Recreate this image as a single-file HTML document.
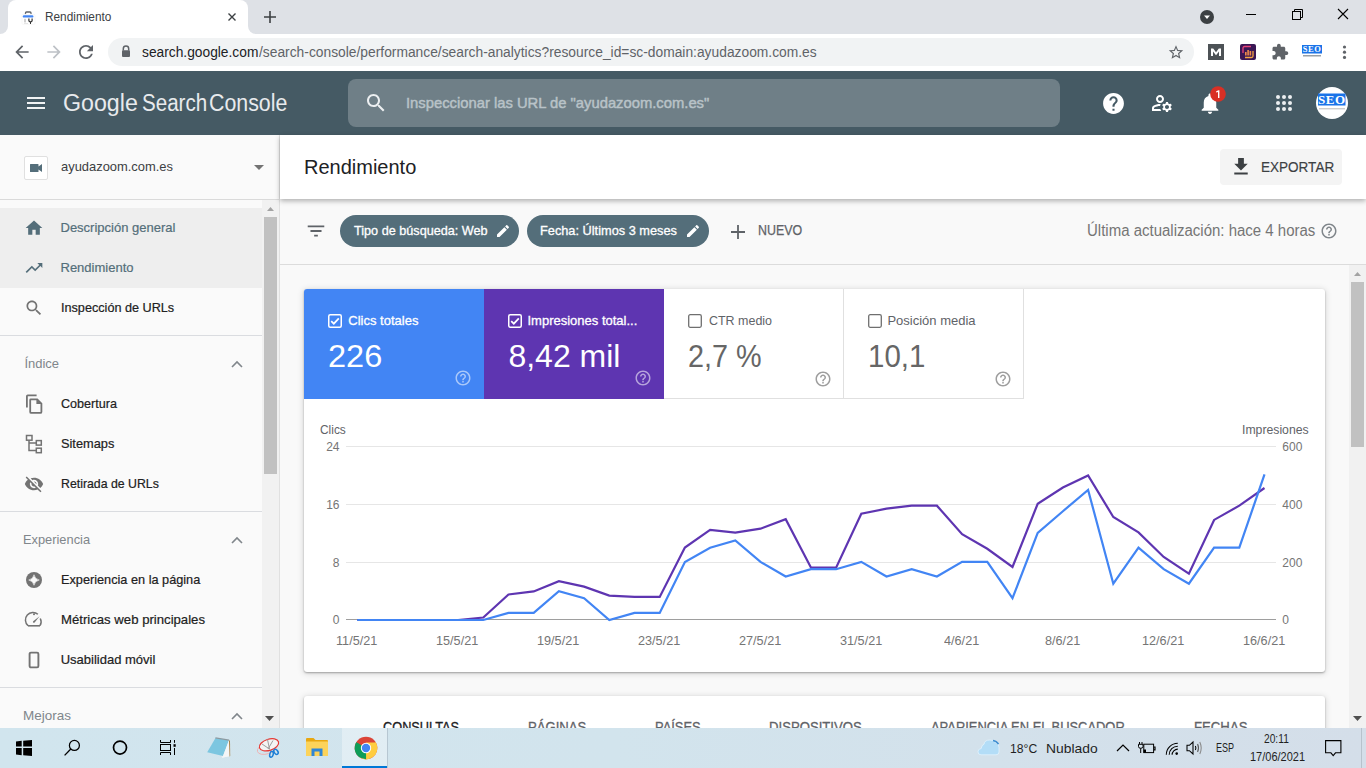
<!DOCTYPE html>
<html><head><meta charset="utf-8"><style>
*{box-sizing:border-box;margin:0;padding:0}
html,body{width:1366px;height:768px;overflow:hidden;background:#f8f9fa;font-family:"Liberation Sans",sans-serif;position:relative}
.a{position:absolute}
.t{position:absolute;line-height:0;white-space:pre;transform-origin:0 0;font-family:"Liberation Sans",sans-serif}
svg{position:absolute;overflow:visible}
</style></head><body>
<!-- ===== Chrome tab strip ===== -->
<div class="a" style="left:0;top:0;width:1366px;height:34px;background:#dee1e6"></div>
<div class="a" style="left:8px;top:0;width:240px;height:34px;background:#fff;border-radius:8px 8px 0 0"></div>
<!-- tab flare corners -->
<div class="a" style="left:0;top:26px;width:8px;height:8px;background:#fff"></div>
<div class="a" style="left:0;top:18px;width:8px;height:16px;background:#dee1e6;border-bottom-right-radius:8px"></div>
<div class="a" style="left:248px;top:26px;width:8px;height:8px;background:#fff"></div>
<div class="a" style="left:248px;top:18px;width:8px;height:16px;background:#dee1e6;border-bottom-left-radius:8px"></div>
<!-- toolbar -->
<div class="a" style="left:0;top:34px;width:1366px;height:37px;background:#fff"></div>
<div class="a" style="left:108px;top:38px;width:1086px;height:28px;background:#f1f3f4;border-radius:14px"></div>

<!-- ===== GSC header ===== -->
<div class="a" style="left:0;top:71px;width:1366px;height:64px;background:#455a64"></div>
<div class="a" style="left:348px;top:79px;width:712px;height:48px;background:#6f7f87;border-radius:8px"></div>

<!-- ===== Sidebar ===== -->
<div class="a" style="left:0;top:135px;width:279px;height:593px;background:#fafafa"></div>
<div class="a" style="left:279px;top:135px;width:1px;height:593px;background:#e0e0e0"></div>
<div class="a" style="left:0;top:199px;width:279px;height:1px;background:#dadada"></div>
<div class="a" style="left:24px;top:156px;width:24px;height:24px;background:#fff;border:1px solid #e0e0e0;border-radius:2px"></div>
<div class="a" style="left:0;top:208px;width:262px;height:80px;background:#eeeeee"></div>
<div class="a" style="left:0;top:335px;width:262px;height:1px;background:#dadce0"></div>
<div class="a" style="left:0;top:511px;width:262px;height:1px;background:#dadce0"></div>
<div class="a" style="left:0;top:687px;width:262px;height:1px;background:#dadce0"></div>
<!-- sidebar scrollbar -->
<div class="a" style="left:262px;top:200px;width:17px;height:528px;background:#f1f1f1"></div>
<div class="a" style="left:264px;top:217px;width:13px;height:257px;background:#c1c1c1"></div>

<!-- ===== Main ===== -->
<div class="a" style="left:280px;top:135px;width:1086px;height:593px;background:#f9f9f9"></div>
<div class="a" style="left:280px;top:264px;width:1086px;height:1px;background:#dcdcdc"></div>
<div class="a" style="left:280px;top:135px;width:1086px;height:64px;background:#fff;box-shadow:0 2px 5px rgba(0,0,0,.3)"></div>
<div class="a" style="left:1220px;top:149px;width:122px;height:36px;background:#f4f4f4;border-radius:4px"></div>
<!-- chips -->
<div class="a" style="left:340px;top:215px;width:179px;height:32px;background:#546e7a;border-radius:16px"></div>
<div class="a" style="left:527px;top:215px;width:182px;height:32px;background:#546e7a;border-radius:16px"></div>
<!-- main scrollbar -->
<div class="a" style="left:1349px;top:265px;width:17px;height:463px;background:#f1f1f1"></div>
<div class="a" style="left:1351px;top:282px;width:13px;height:165px;background:#c1c1c1"></div>

<!-- card 1 -->
<div class="a" style="left:304px;top:289px;width:1021px;height:383px;background:#fff;border-radius:3px;box-shadow:0 1px 2px rgba(0,0,0,.3),0 1px 6px 1px rgba(0,0,0,.12)"></div>
<div class="a" style="left:304px;top:289px;width:180px;height:110px;background:#4285f4;border-top-left-radius:3px"></div>
<div class="a" style="left:484px;top:289px;width:180px;height:110px;background:#5e35b1"></div>
<div class="a" style="left:664px;top:289px;width:360px;height:110px;border-right:1px solid #e0e0e0;border-bottom:1px solid #e0e0e0"></div>
<div class="a" style="left:843px;top:289px;width:1px;height:110px;background:#e0e0e0"></div>

<!-- card 2 -->
<div class="a" style="left:304px;top:696px;width:1021px;height:60px;background:#fff;border-radius:3px;box-shadow:0 1px 2px rgba(0,0,0,.3),0 1px 6px 1px rgba(0,0,0,.12)"></div>

<!-- ===== Taskbar ===== -->
<div class="a" style="left:0;top:728px;width:1366px;height:40px;background:linear-gradient(90deg,#d1e5ee 0%,#d2e4ed 45%,#d4dee9 100%);z-index:10"></div>
<div class="a" style="left:342px;top:728px;width:45px;height:40px;background:rgba(255,255,255,.35);z-index:10"></div>
<div class="a" style="left:342px;top:766px;width:45px;height:2px;background:#0078d7;z-index:10"></div>
<svg width="1366" height="768" style="left:0;top:0" viewBox="0 0 1366 768">
<g stroke="#e6e6e6" stroke-width="1"><line x1="346" y1="446.5" x2="1276" y2="446.5"/><line x1="346" y1="504.5" x2="1276" y2="504.5"/><line x1="346" y1="562.5" x2="1276" y2="562.5"/></g>
<line x1="346" y1="619.5" x2="1276" y2="619.5" stroke="#9e9e9e" stroke-width="1"/>
<polyline fill="none" stroke="#5e35b1" stroke-width="2.2" stroke-linejoin="miter" stroke-miterlimit="10" points="357.3,620.00 382.5,620.00 407.7,620.00 432.9,620.00 458.1,620.00 483.3,617.48 508.5,594.45 533.7,591.42 558.9,581.22 584.1,586.67 609.3,595.66 634.5,596.97 659.7,596.97 684.9,547.48 710.1,529.91 735.3,532.63 760.5,528.70 785.7,519.20 810.9,567.48 836.1,567.68 861.3,513.75 886.5,508.70 911.7,505.67 936.9,505.67 962.1,534.25 987.3,548.79 1012.5,566.98 1037.7,503.75 1062.9,487.49 1088.1,475.47 1113.3,516.98 1138.5,532.43 1163.7,556.98 1188.9,573.74 1214.1,519.91 1239.3,505.67 1264.5,487.99"/>
<polyline fill="none" stroke="#4285f4" stroke-width="2.2" stroke-linejoin="miter" stroke-miterlimit="10" points="357.3,620.00 382.5,620.00 407.7,620.00 432.9,620.00 458.1,620.00 483.3,620.00 508.5,612.93 533.7,612.93 558.9,591.22 584.1,598.18 609.3,620.00 634.5,612.93 659.7,612.93 684.9,561.92 710.1,547.68 735.3,540.41 760.5,561.92 785.7,576.47 810.9,569.20 836.1,569.20 861.3,561.92 886.5,576.47 911.7,569.20 936.9,576.47 962.1,561.92 987.3,561.92 1012.5,598.18 1037.7,532.94 1062.9,511.22 1088.1,489.91 1113.3,583.74 1138.5,547.68 1163.7,569.20 1188.9,583.74 1214.1,547.68 1239.3,547.68 1264.5,474.46"/>
</svg>
<!-- ===== Chrome icons ===== -->
<!-- favicon -->
<svg style="left:21px;top:10px" width="15" height="15" viewBox="0 0 15 15">
 <path d="M4.5 4.2V3Q4.5 2 5.5 2H9Q10 2 10 3V4.2" fill="none" stroke="#5f6368" stroke-width="1.3"/>
 <rect x="1" y="4.3" width="13" height="10" rx="1" fill="#fff" stroke="#eee" stroke-width=".5"/>
 <rect x="1.8" y="5.2" width="10.6" height="2.4" rx="1.2" fill="#4285f4"/>
 <rect x="3" y="8.8" width="2" height="3.6" fill="#d0d0d0"/><rect x="3" y="13" width="4" height=".8" fill="#e0e0e0"/>
 <path d="M7.3 8.6V10.8Q7.3 12.2 9 12.4V14H10V12.4Q11.7 12.2 11.7 10.8V8.6H10.5V10.5Q10.5 11.3 9.5 11.3Q8.5 11.3 8.5 10.5V8.6Z" fill="#333"/>
</svg>
<!-- tab close -->
<svg style="left:228px;top:13px" width="8" height="8" viewBox="0 0 8 8"><path d="M0.5 0.5L7.5 7.5M7.5 0.5L0.5 7.5" stroke="#3c4043" stroke-width="1.4"/></svg>
<!-- new tab plus -->
<svg style="left:264px;top:11px" width="12" height="12" viewBox="0 0 12 12"><path d="M6 0V12M0 6H12" stroke="#3c4043" stroke-width="1.6"/></svg>
<!-- title bar dropdown -->
<svg style="left:1200px;top:10px" width="14" height="14" viewBox="0 0 14 14"><circle cx="7" cy="7" r="7" fill="#3c4043"/><path d="M4 5.5H10L7 9Z" fill="#fff"/></svg>
<!-- minimize -->
<div class="a" style="left:1246px;top:14px;width:10px;height:1px;background:#000"></div>
<!-- restore -->
<svg style="left:1291px;top:9px" width="12" height="11" viewBox="0 0 12 11"><rect x="1.5" y="2.5" width="8" height="8" fill="none" stroke="#000" stroke-width="1"/><path d="M3.5 2.5V0.5H11.5V8.5H9.5" fill="none" stroke="#000" stroke-width="1"/></svg>
<!-- close -->
<svg style="left:1338px;top:9px" width="10" height="10" viewBox="0 0 10 10"><path d="M0 0L10 10M10 0L0 10" stroke="#000" stroke-width="1.1"/></svg>
<!-- back -->
<svg style="left:10px;top:40px" width="24" height="24" viewBox="0 0 24 24"><path d="M20 11H7.83l5.59-5.59L12 4l-8 8 8 8 1.41-1.41L7.83 13H20v-2z" fill="#5f6368" transform="translate(12 12) scale(0.83) translate(-12 -12)"/></svg>
<!-- forward -->
<svg style="left:42px;top:40px" width="24" height="24" viewBox="0 0 24 24"><path d="M12 4l-1.41 1.41L16.17 11H4v2h12.17l-5.58 5.59L12 20l8-8z" fill="#bdc1c6" transform="translate(12 12) scale(0.83) translate(-12 -12)"/></svg>
<!-- reload -->
<svg style="left:74px;top:40px" width="24" height="24" viewBox="0 0 24 24"><path d="M17.65 6.35C16.2 4.9 14.21 4 12 4c-4.42 0-7.99 3.58-7.99 8s3.57 8 7.99 8c3.73 0 6.84-2.55 7.73-6h-2.08c-.82 2.33-3.04 4-5.65 4-3.31 0-6-2.69-6-6s2.69-6 6-6c1.66 0 3.14.69 4.22 1.78L13 11h7V4l-2.35 2.35z" fill="#5f6368" transform="translate(12 12) scale(0.875) translate(-12 -12)"/></svg>
<!-- lock -->
<svg style="left:121px;top:45px" width="10" height="13" viewBox="0 0 10 13"><path d="M2.3 5.5V3.8A2.7 2.7 0 0 1 7.7 3.8V5.5" fill="none" stroke="#5f6368" stroke-width="1.5"/><rect x="1" y="5.2" width="8" height="6.8" rx="1" fill="#5f6368"/></svg>
<!-- star -->
<svg style="left:1164px;top:40px" width="24" height="24" viewBox="0 0 24 24"><path d="M22 9.24l-7.19-.62L12 2 9.19 8.63 2 9.24l5.46 4.73L5.82 21 12 17.27 18.18 21l-1.63-7.03L22 9.24zM12 15.4l-3.76 2.27 1-4.28-3.32-2.88 4.38-.38L12 6.1l1.71 4.04 4.38.38-3.32 2.88 1 4.28L12 15.4z" fill="#5f6368" transform="translate(12 12) scale(0.72) translate(-12 -11.5)"/></svg>
<!-- ext M -->
<svg style="left:1208px;top:44px" width="16" height="16" viewBox="0 0 16 16"><rect width="16" height="16" fill="#4d5256"/><path d="M3 12V4.5H5.2L8 8.3L10.8 4.5H13V12H11V7.6L8 11.2L5 7.6V12Z" fill="#fff"/></svg>
<!-- ext purple -->
<svg style="left:1240px;top:44px" width="16" height="16" viewBox="0 0 16 16"><rect width="16" height="16" rx="2" fill="#3a1654"/><path d="M3 9V4A1.5 1.5 0 0 1 4.5 2.5H11" fill="none" stroke="#e8447a" stroke-width="1.3"/><path d="M13 7V12A1.5 1.5 0 0 1 11.5 13.5H5" fill="none" stroke="#f5a442" stroke-width="1.3"/><rect x="5" y="8" width="1.6" height="3.5" fill="#f08a4b"/><rect x="7.3" y="6" width="1.6" height="5.5" fill="#f08a4b"/><rect x="9.6" y="7" width="1.6" height="4.5" fill="#f08a4b"/></svg>
<!-- puzzle -->
<svg style="left:1271px;top:43px" width="18" height="18" viewBox="0 0 24 24"><path d="M20.5 11H19V7c0-1.1-.9-2-2-2h-4V3.5C13 2.12 11.88 1 10.5 1S8 2.12 8 3.5V5H4c-1.1 0-1.99.9-1.99 2v3.8H3.5c1.49 0 2.7 1.21 2.7 2.7s-1.21 2.7-2.7 2.7H2V20c0 1.1.9 2 2 2h3.8v-1.5c0-1.49 1.21-2.7 2.7-2.7 1.49 0 2.7 1.21 2.7 2.7V22H17c1.1 0 2-.9 2-2v-4h1.5c1.38 0 2.5-1.12 2.5-2.5S21.88 11 20.5 11z" fill="#5f6368"/></svg>
<!-- SEO ext -->
<svg style="left:1302px;top:45px" width="20" height="13" viewBox="0 0 20 13"><rect x="0" y="0" width="20" height="8.5" fill="#1a73e8"/><text x="10" y="7.4" text-anchor="middle" font-family="Liberation Serif" font-weight="700" font-size="8.5" fill="#fff" letter-spacing="0.5">SEO</text><rect x="1" y="10" width="18" height="1.5" fill="#9aa0a6"/></svg>
<!-- kebab -->
<svg style="left:1342px;top:45px" width="5" height="15" viewBox="0 0 5 15"><circle cx="2.5" cy="2" r="1.6" fill="#5f6368"/><circle cx="2.5" cy="7.2" r="1.6" fill="#5f6368"/><circle cx="2.5" cy="12.4" r="1.6" fill="#5f6368"/></svg>

<!-- ===== GSC header icons ===== -->
<svg style="left:27px;top:97px" width="18" height="12" viewBox="0 0 18 12"><rect x="0" y="0" width="18" height="2" fill="#f1f3f4"/><rect x="0" y="5" width="18" height="2" fill="#f1f3f4"/><rect x="0" y="10" width="18" height="2" fill="#f1f3f4"/></svg>
<svg style="left:364px;top:91px" width="24" height="24" viewBox="0 0 24 24"><path d="M15.5 14h-.79l-.28-.27C15.41 12.59 16 11.11 16 9.5 16 5.91 13.09 3 9.5 3S3 5.91 3 9.5 5.91 16 9.5 16c1.61 0 3.09-.59 4.23-1.57l.27.28v.79l5 4.99L20.49 19l-4.99-5zm-6 0C7.01 14 5 11.99 5 9.5S7.01 5 9.5 5 14 7.01 14 9.5 11.99 14 9.5 14z" fill="#eceff1"/></svg>
<!-- help filled -->
<svg style="left:1101px;top:90.5px" width="25" height="25" viewBox="0 0 24 24"><path d="M12 2C6.48 2 2 6.48 2 12s4.48 10 10 10 10-4.48 10-10S17.52 2 12 2zm1 17h-2v-2h2v2zm2.07-7.75l-.9.92C13.45 12.9 13 13.5 13 15h-2v-.5c0-1.1.45-2.1 1.17-2.83l1.24-1.26c.37-.36.59-.86.59-1.41 0-1.1-.9-2-2-2s-2 .9-2 2H8c0-2.21 1.79-4 4-4s4 1.79 4 4c0 .88-.36 1.68-.93 2.25z" fill="#fff"/></svg>
<!-- manage accounts -->
<svg style="left:1150px;top:91px" width="24" height="24" viewBox="0 0 24 24"><path d="M4 18v-.65c0-.34.16-.66.41-.81C6.1 15.53 8.03 15 10 15c.03 0 .05 0 .08.01.1-.7.3-1.37.59-1.98-.22-.02-.44-.03-.67-.03-2.42 0-4.68.67-6.61 1.82-.88.52-1.39 1.5-1.39 2.53V20h9.26c-.42-.6-.75-1.28-.97-2H4zM10 12c2.21 0 4-1.790 4-4s-1.79-4-4-4-4 1.79-4 4 1.79 4 4 4zm0-6c1.1 0 2 .9 2 2s-.9 2-2 2-2-.9-2-2 .9-2 2-2zM20.75 16c0-.22-.03-.42-.06-.63l1.14-1.01-1-1.73-1.45.49c-.32-.27-.68-.48-1.08-.63L18 11h-2l-.3 1.49c-.4.15-.76.36-1.08.63l-1.45-.49-1 1.73 1.14 1.010c-.03.21-.06.41-.06.63s.03.42.06.63l-1.14 1.01 1 1.73 1.45-.49c.32.27.68.48 1.08.63L16 21h2l.3-1.49c.4-.15.76-.36 1.08-.63l1.45.49 1-1.73-1.14-1.01c.03-.21.06-.41.06-.63zM17 18c-1.1 0-2-.9-2-2s.9-2 2-2 2 .9 2 2-.9 2-2 2z" fill="#fff"/></svg>
<!-- bell -->
<svg style="left:1197px;top:90.5px" width="26" height="25" viewBox="0 0 24 24"><path d="M12 22c1.1 0 2-.9 2-2h-4c0 1.1.89 2 2 2zm6-6v-5c0-3.07-1.64-5.64-4.5-6.32V4c0-.83-.67-1.5-1.5-1.5s-1.5.67-1.5 1.5v.68C7.63 5.36 6 7.92 6 11v5l-2 2v1h16v-1l-2-2z" fill="#fff"/></svg>
<svg style="left:1209.5px;top:86px" width="16" height="16" viewBox="0 0 16 16"><circle cx="8" cy="8" r="7.8" fill="#d93025"/><path d="M6.2 5.3L8.6 4.2H9.4V12H8V6L6.2 6.6Z" fill="#fff"/></svg>
<!-- apps -->
<svg style="left:1275px;top:94px" width="18" height="18" viewBox="0 0 18 18"><g fill="#eceff1"><circle cx="3" cy="3" r="2"/><circle cx="9" cy="3" r="2"/><circle cx="15" cy="3" r="2"/><circle cx="3" cy="9" r="2"/><circle cx="9" cy="9" r="2"/><circle cx="15" cy="9" r="2"/><circle cx="3" cy="15" r="2"/><circle cx="9" cy="15" r="2"/><circle cx="15" cy="15" r="2"/></g></svg>
<!-- avatar -->
<svg style="left:1316px;top:87px" width="32" height="32" viewBox="0 0 32 32"><circle cx="16" cy="16" r="16" fill="#fff"/><rect x="2" y="6.5" width="27.5" height="12" fill="#1a73e8"/><text x="15.8" y="17.3" text-anchor="middle" font-family="Liberation Serif" font-weight="700" font-size="13" fill="#fff" letter-spacing="0.6">SEO</text><rect x="3" y="21.3" width="26" height="1" fill="#b8b8b8"/></svg>

<!-- ===== Sidebar icons ===== -->
<svg style="left:30px;top:164px" width="13" height="8" viewBox="0 0 13 8"><path d="M0 0.5Q0 0 .5 0H8Q8.5 0 8.5 .5V2.5L12 0V8L8.5 5.5V7.5Q8.5 8 8 8H.5Q0 8 0 7.5Z" fill="#546e7a"/></svg>
<svg style="left:254px;top:165px" width="10" height="5" viewBox="0 0 10 5"><path d="M0 0H10L5 5Z" fill="#737373"/></svg>
<svg style="left:24px;top:218px" width="20" height="20" viewBox="0 0 24 24"><path d="M10 20v-6h4v6h5v-8h3L12 3 2 12h3v8z" fill="#546e7a"/></svg>
<svg style="left:24px;top:258px" width="20" height="20" viewBox="0 0 24 24"><path d="M16 6l2.29 2.29-4.88 4.88-4-4L2 16.59 3.41 18l6-6 4 4 6.3-6.29L22 12V6z" fill="#546e7a"/></svg>
<svg style="left:24px;top:298px" width="20" height="20" viewBox="0 0 24 24"><path d="M15.5 14h-.79l-.28-.27C15.41 12.59 16 11.11 16 9.5 16 5.91 13.09 3 9.5 3S3 5.91 3 9.5 5.91 16 9.5 16c1.61 0 3.09-.59 4.23-1.57l.27.28v.79l5 4.99L20.49 19l-4.99-5zm-6 0C7.01 14 5 11.99 5 9.5S7.01 5 9.5 5 14 7.01 14 9.5 11.99 14 9.5 14z" fill="#737373"/></svg>
<!-- chevrons -->
<svg style="left:231px;top:360px" width="12" height="8" viewBox="0 0 12 8"><path d="M1 7L6 2L11 7" fill="none" stroke="#80868b" stroke-width="1.6"/></svg>
<svg style="left:231px;top:536px" width="12" height="8" viewBox="0 0 12 8"><path d="M1 7L6 2L11 7" fill="none" stroke="#80868b" stroke-width="1.6"/></svg>
<svg style="left:231px;top:712px" width="12" height="8" viewBox="0 0 12 8"><path d="M1 7L6 2L11 7" fill="none" stroke="#80868b" stroke-width="1.6"/></svg>
<!-- cobertura -->
<svg style="left:24px;top:393px" width="20" height="22" viewBox="0 0 20 22"><path d="M2.9 14.5V3.2Q2.9 2.4 3.7 2.4H12.6" fill="none" stroke="#737373" stroke-width="1.8"/><path d="M6.2 6.9Q6.2 6.4 6.7 6.4H13.2L17.4 10.6V18.9Q17.4 19.9 16.4 19.9H7.2Q6.2 19.9 6.2 18.9Z" fill="none" stroke="#737373" stroke-width="1.8"/><path d="M12.6 6.4V11H17.4" fill="#737373"/><path d="M12.6 6.4L17.4 11H12.6Z" fill="#737373"/></svg>
<!-- sitemaps -->
<svg style="left:24px;top:433px" width="20" height="22" viewBox="0 0 20 22"><g fill="none" stroke="#737373" stroke-width="1.5"><rect x="2.5" y="2.5" width="5.5" height="4.7"/><rect x="12.3" y="7.6" width="5" height="4.5"/><rect x="12.3" y="15.2" width="5" height="4.5"/><path d="M5 7.2V17.5H12.3M5 9.9H12.3"/></g></svg>
<!-- visibility off -->
<svg style="left:24px;top:474px" width="20" height="20" viewBox="0 0 24 24"><path d="M12 7c2.76 0 5 2.24 5 5 0 .65-.13 1.26-.36 1.83l2.92 2.92c1.51-1.26 2.7-2.89 3.43-4.75-1.73-4.39-6-7.5-11-7.5-1.4 0-2.740.25-3.98.7l2.16 2.16C10.74 7.13 11.35 7 12 7zM2 4.27l2.28 2.28.46.46C3.08 8.3 1.78 10.02 1 12c1.73 4.39 6 7.5 11 7.5 1.55 0 3.03-.3 4.38-.84l.42.42L19.730 22 21 20.73 3.27 3 2 4.27zM7.53 9.8l1.55 1.55c-.05.21-.08.43-.08.65 0 1.66 1.34 3 3 3 .22 0 .44-.03.65-.08l1.55 1.55c-.67.33-1.41.53-2.2.53-2.76 0-5-2.24-5-5 0-.79.2-1.530.53-2.2zm4.31-.78l3.15 3.15.02-.16c0-1.66-1.34-3-3-3l-.17.01z" fill="#737373"/></svg>
<!-- page experience -->
<svg style="left:25px;top:571px" width="18" height="18" viewBox="0 0 18 18"><circle cx="9" cy="9" r="8" fill="#737373"/><path d="M9 3.7Q9.9 8.1 14.3 9Q9.9 9.9 9 14.3Q8.1 9.9 3.7 9Q8.1 8.1 9 3.7Z" fill="#fafafa" stroke="#fafafa" stroke-width=".5" stroke-linejoin="round"/></svg>
<!-- speed -->
<svg style="left:25px;top:611px" width="18" height="18" viewBox="0 0 18 18"><path d="M12.8 3.2A7.2 7.2 0 0 0 2.6 14.4Q1.8 12.6 1.8 11.2" fill="none" stroke="#737373" stroke-width="0"/>
<path d="M12.9 3.3A7.2 7.2 0 0 0 3 14.6" fill="none" stroke="#737373" stroke-width="1.5"/>
<path d="M15.3 7.5A7.2 7.2 0 0 1 15 14.6" fill="none" stroke="#737373" stroke-width="1.5"/>
<path d="M3 14.8H15" stroke="#737373" stroke-width="1.6"/>
<path d="M14.6 5.2L8.2 10.2Q7.6 10.9 8.2 11.5Q8.9 12.1 9.6 11.4Z" fill="#737373"/>
<circle cx="9" cy="3.2" r="1" fill="#737373"/></svg>
<!-- phone -->
<svg style="left:28px;top:651px" width="12" height="18" viewBox="0 0 12 18"><rect x="1.6" y="1.6" width="8.8" height="14.8" rx="1.3" fill="none" stroke="#737373" stroke-width="1.9"/></svg>
<!-- sidebar scroll arrows -->
<svg style="left:267px;top:207px" width="7" height="4" viewBox="0 0 7 4"><path d="M0 4H7L3.5 0Z" fill="#a3a3a3"/></svg>
<svg style="left:265px;top:716px" width="9" height="5" viewBox="0 0 9 5"><path d="M0 0H9L4.5 5Z" fill="#505050"/></svg>

<!-- ===== Main icons ===== -->
<svg style="left:1229px;top:154px" width="24" height="24" viewBox="0 0 24 24"><path d="M19 9h-4V3H9v6H5l7 7 7-7zM5 18v2h14v-2H5z" fill="#3c4043" transform="translate(12 18.5) scale(0.96) translate(-12 -18)"/></svg>
<svg style="left:304px;top:219px" width="24" height="24" viewBox="0 0 24 24"><path d="M10 18h4v-2h-4v2zM3 6v2h18V6H3zm3 7h12v-2H6v2z" fill="#5f6368" transform="translate(12 12) scale(0.92) translate(-12 -12)"/></svg>
<svg style="left:495px;top:223px" width="16" height="16" viewBox="0 0 24 24"><path d="M3 17.25V21h3.75L17.81 9.94l-3.75-3.75L3 17.25zM20.71 7.04c.39-.39.39-1.02 0-1.41l-2.34-2.34c-.39-.39-1.02-.39-1.41 0l-1.83 1.83 3.75 3.75 1.83-1.83z" fill="#fff"/></svg>
<svg style="left:685px;top:223px" width="16" height="16" viewBox="0 0 24 24"><path d="M3 17.25V21h3.75L17.81 9.94l-3.75-3.75L3 17.25zM20.71 7.04c.39-.39.39-1.02 0-1.41l-2.34-2.34c-.39-.39-1.02-.39-1.41 0l-1.830 1.83 3.75 3.75 1.83-1.83z" fill="#fff"/></svg>
<svg style="left:729.5px;top:223.5px" width="16" height="16" viewBox="0 0 16 16"><path d="M8 1V15M1 8H15" stroke="#5f6368" stroke-width="1.8"/></svg>
<!-- help outline last update -->
<svg style="left:1320px;top:222px" width="18" height="18" viewBox="0 0 24 24"><path d="M11 18h2v-2h-2v2zm1-16C6.48 2 2 6.48 2 12s4.48 10 10 10 10-4.48 10-10S17.52 2 12 2zm0 18c-4.41 0-8-3.59-8-8s3.59-8 8-8 8 3.59 8 8-3.59 8-8 8zm0-14c-2.21 0-4 1.79-4 4h2c0-1.1.9-2 2-2s2 .9 2 2c0 2-3 1.75-3 5h2c0-2.25 3-2.5 3-5 0-2.21-1.79-4-4-4z" fill="#80868b"/></svg>
<!-- checkboxes -->
<svg style="left:328px;top:314px" width="14" height="14" viewBox="0 0 14 14"><rect x="0.75" y="0.75" width="12.5" height="12.5" rx="1.5" fill="none" stroke="#fff" stroke-width="1.5"/><path d="M3.2 7.2L5.8 9.7L10.8 4.3" fill="none" stroke="#fff" stroke-width="1.7"/></svg>
<svg style="left:508px;top:314px" width="14" height="14" viewBox="0 0 14 14"><rect x="0.75" y="0.75" width="12.5" height="12.5" rx="1.5" fill="none" stroke="#fff" stroke-width="1.5"/><path d="M3.2 7.2L5.8 9.7L10.8 4.3" fill="none" stroke="#fff" stroke-width="1.7"/></svg>
<svg style="left:688px;top:314px" width="14" height="14" viewBox="0 0 14 14"><rect x="0.7" y="0.7" width="12.6" height="12.6" rx="1.5" fill="none" stroke="#6f6f6f" stroke-width="1.3"/></svg>
<svg style="left:868px;top:314px" width="14" height="14" viewBox="0 0 14 14"><rect x="0.7" y="0.7" width="12.6" height="12.6" rx="1.5" fill="none" stroke="#6f6f6f" stroke-width="1.3"/></svg>
<!-- tile help icons -->
<svg style="left:454px;top:369px" width="18" height="18" viewBox="0 0 24 24"><path d="M11 18h2v-2h-2v2zm1-16C6.48 2 2 6.48 2 12s4.48 10 10 10 10-4.48 10-10S17.52 2 12 2zm0 18c-4.41 0-8-3.59-8-8s3.59-8 8-8 8 3.59 8 8-3.59 8-8 8zm0-14c-2.21 0-4 1.79-4 4h2c0-1.1.9-2 2-2s2 .9 2 2c0 2-3 1.75-3 5h2c0-2.25 3-2.5 3-5 0-2.21-1.79-4-4-4z" fill="rgba(255,255,255,.55)"/></svg>
<svg style="left:634px;top:369px" width="18" height="18" viewBox="0 0 24 24"><path d="M11 18h2v-2h-2v2zm1-16C6.48 2 2 6.48 2 12s4.48 10 10 10 10-4.48 10-10S17.52 2 12 2zm0 18c-4.41 0-8-3.59-8-8s3.59-8 8-8 8 3.59 8 8-3.59 8-8 8zm0-14c-2.21 0-4 1.79-4 4h2c0-1.1.9-2 2-2s2 .9 2 2c0 2-3 1.75-3 5h2c0-2.25 3-2.5 3-5 0-2.21-1.79-4-4-4z" fill="rgba(255,255,255,.55)"/></svg>
<svg style="left:814px;top:369.5px" width="18" height="18" viewBox="0 0 24 24"><path d="M11 18h2v-2h-2v2zm1-16C6.48 2 2 6.48 2 12s4.48 10 10 10 10-4.48 10-10S17.52 2 12 2zm0 18c-4.41 0-8-3.59-8-8s3.59-8 8-8 8 3.59 8 8-3.59 8-8 8zm0-14c-2.21 0-4 1.79-4 4h2c0-1.1.9-2 2-2s2 .9 2 2c0 2-3 1.75-3 5h2c0-2.25 3-2.5 3-5 0-2.21-1.79-4-4-4z" fill="#9e9e9e"/></svg>
<svg style="left:994px;top:369.5px" width="18" height="18" viewBox="0 0 24 24"><path d="M11 18h2v-2h-2v2zm1-16C6.48 2 2 6.48 2 12s4.48 10 10 10 10-4.48 10-10S17.52 2 12 2zm0 18c-4.41 0-8-3.59-8-8s3.59-8 8-8 8 3.59 8 8-3.59 8-8 8zm0-14c-2.21 0-4 1.79-4 4h2c0-1.1.9-2 2-2s2 .9 2 2c0 2-3 1.75-3 5h2c0-2.25 3-2.5 3-5 0-2.21-1.79-4-4-4z" fill="#9e9e9e"/></svg>
<!-- main scroll arrows -->
<svg style="left:1354px;top:272px" width="7" height="4" viewBox="0 0 7 4"><path d="M0 4H7L3.5 0Z" fill="#a3a3a3"/></svg>
<svg style="left:1353px;top:716px" width="9" height="5" viewBox="0 0 9 5"><path d="M0 0H9L4.5 5Z" fill="#505050"/></svg>

<!-- ===== Taskbar icons ===== -->
<div style="position:absolute;left:0;top:0;z-index:12">
<svg style="left:16px;top:740px" width="16" height="16" viewBox="0 0 16 16"><path d="M0 1.4L5.7 0.8V6.6H0ZM7.2 0.7L16 0V6.6H7.2ZM0 8H5.7V15.2L0 14.5ZM7.2 8H16V16L7.2 15.3Z" fill="#000"/></svg>
<svg style="left:63px;top:739px" width="18" height="18" viewBox="0 0 18 18"><circle cx="11.4" cy="6.4" r="5" fill="none" stroke="#000" stroke-width="1.25"/><path d="M7.8 10L1.6 16.4" stroke="#000" stroke-width="1.3"/></svg>
<svg style="left:111px;top:739px" width="18" height="18" viewBox="0 0 18 18"><circle cx="9" cy="8.6" r="6.5" fill="none" stroke="#000" stroke-width="1.7"/></svg>
<svg style="left:159px;top:739px" width="18" height="18" viewBox="0 0 18 18"><g fill="none" stroke="#000" stroke-width="1"><path d="M1.5 1V3.5H11.5V1M1.5 16V13.5H11.5V16"/><rect x="1.5" y="5.5" width="10" height="6"/><path d="M15.5 1V3.8M15.5 9V16"/></g><rect x="14.5" y="5.2" width="2.2" height="2.6" fill="#000"/></svg>
<!-- notepad -->
<svg style="left:206px;top:736px" width="25" height="23" viewBox="0 0 25 23">
<path d="M9.5 2L23.3 4.2L23.5 20.2L16 21.8Z" fill="#e9eef0"/><path d="M23 4.2L24 4.8L24.2 20L23.4 20.5Z" fill="#a4793b"/>
<path d="M9.5 2L23 4.3L17 20L1.2 16.3Z" fill="#7cc6e0"/>
<path d="M23 4.3L23.3 20.3L16 21.8L17 20Z" fill="#f4f6f7"/>
<path d="M9.5 1.3L23.2 3.6L23 4.8L9.3 2.5Z" fill="#8d9aa0"/></svg>
<!-- snipping -->
<svg style="left:255px;top:736px" width="26" height="23" viewBox="0 0 26 23">
<ellipse cx="12" cy="12.5" rx="10" ry="5.3" transform="rotate(-18 12 12.5)" fill="none" stroke="#f0b0b0" stroke-width=".9"/>
<ellipse cx="14" cy="8.8" rx="10" ry="5.6" transform="rotate(-18 14 8.8)" fill="#f4f4f4" stroke="#e53935" stroke-width="1.2"/>
<path d="M12.5 3.5L14.5 13M18 4.5L13 13M7 8L14.5 13" stroke="#9e9e9e" stroke-width="1" fill="none"/>
<ellipse cx="16.5" cy="18.3" rx="1.7" ry="3" transform="rotate(15 16.5 18.3)" fill="none" stroke="#1e7fd6" stroke-width="1.5"/>
<ellipse cx="21" cy="15.8" rx="1.8" ry="2.8" transform="rotate(-35 21 15.8)" fill="none" stroke="#1e7fd6" stroke-width="1.5"/>
</svg>
<!-- folder -->
<svg style="left:306px;top:738px" width="22" height="19" viewBox="0 0 22 19"><path d="M0 1Q0 0 1 0H7.5L9.5 2H21Q22 2 22 3V4H0Z" fill="#e8a710"/><rect x="0" y="3.5" width="22" height="14.5" fill="#fcd35a"/><path d="M5.5 18V10.5H16.5V18H13.5V13.5H8.5V18Z" fill="#2f86d6"/></svg>
<!-- chrome -->
<svg style="left:354px;top:736px" width="24" height="24" viewBox="0 0 24 24"><circle cx="12" cy="12" r="11.3" fill="#db4437"/><path d="M12 12L2.2 6.35A11.3 11.3 0 0 0 6.35 21.8Z" fill="#0f9d58"/><path d="M12 12L6.35 21.8A11.3 11.3 0 0 0 23.3 12V11.9L21.8 6.35Z" fill="#ffcd40"/><path d="M12 6.6H21.8A11.3 11.3 0 0 1 23.3 12L17.2 12Z" fill="#ffcd40"/><path d="M12 12L2.2 6.35 6.8 14.9Z" fill="#0f9d58"/><path d="M6.8 14.9L12 12L12.1 23.3 6.35 21.8Z" fill="#0f9d58"/><circle cx="12" cy="12" r="5.2" fill="#fff"/><circle cx="12" cy="12" r="4.2" fill="#4285f4"/></svg>
<!-- tray -->
<svg style="left:977px;top:739px" width="24" height="17" viewBox="0 0 24 17">
<path d="M4 15.8Q1 15.8 1 12.8Q1 9.8 4.2 9.5Q4.6 6 7 5.2Q7.6 1 12.8 1Q17 1 18.5 3.6Q22 4.2 22 8.5V13Q22 15.8 19 15.8Z" fill="#b3ddf7" stroke="#e2f3fd" stroke-width=".8"/>
<path d="M16 1.5Q19.5 1.8 21.5 5.2" stroke="#3f8fd2" stroke-width="1.6" fill="none"/></svg>
<svg style="left:1116px;top:743px" width="14" height="9" viewBox="0 0 14 9"><path d="M1 8L7 2L13 8" fill="none" stroke="#000" stroke-width="1.2"/></svg>
<svg style="left:1137px;top:741px" width="20" height="14" viewBox="0 0 20 14"><g fill="none" stroke="#000" stroke-width="1"><rect x="6.8" y="3.2" width="9.8" height="8.4"/><path d="M17 6H18V8.8H17" stroke-width="1.2"/><path d="M2.5 1V3M5 1V3"/><path d="M1.5 3.3H6V5.5Q6 7.3 3.7 7.3Q1.5 7.3 1.5 5.5Z"/><path d="M3.7 7.3V12"/></g><rect x="6.5" y="8.5" width="2.5" height="3.2" fill="#000"/></svg>
<svg style="left:1165px;top:742px" width="15" height="14" viewBox="0 0 15 14"><g fill="none" stroke="#000" stroke-width="1.05"><path d="M1.3 12.8A11.5 11.5 0 0 1 12.8 1.3"/><path d="M4.2 12.8A8.6 8.6 0 0 1 12.8 4.2"/><path d="M7.1 12.8A5.7 5.7 0 0 1 12.8 7.1"/></g><circle cx="11.7" cy="11.6" r="1.3" fill="#000"/></svg>
<svg style="left:1186px;top:741px" width="18" height="14" viewBox="0 0 18 14"><g fill="none" stroke-width="1.05"><path d="M1 4.3H3.4L7 1V13L3.4 9.7H1Z" stroke="#000"/><path d="M9.4 5Q10.4 7 9.4 9" stroke="#000"/><path d="M11.6 3Q13.4 7 11.6 11" stroke="#555"/><path d="M13.8 1Q16.6 7 13.8 13" stroke="#888"/></g></svg>
<svg style="left:1325px;top:740px" width="17" height="17" viewBox="0 0 17 17"><path d="M0.6 0.6H15.9V12.8H10.5L8.2 15.6L5.9 12.8H0.6Z" fill="none" stroke="#000" stroke-width="1.1"/></svg>
</div>
<div class="a" style="left:1361px;top:728px;width:1px;height:40px;background:#b7c2cc;z-index:11"></div>
<div class="a" style="left:387px;top:728px;width:1px;height:40px;background:#b7c7d2;z-index:11"></div>

<div class="t" style="left:44.60px;top:17.00px;font-size:12px;color:#3c4043;transform:scaleX(0.9853);">Rendimiento</div>
<div class="t" style="left:142.00px;top:52.00px;font-size:14px;color:#202124;transform:scaleX(0.9836);">search.google.com</div>
<div class="t" style="left:258.50px;top:52.00px;font-size:14px;color:#5f6368;transform:scaleX(0.9865);">/search-console/performance/search-analytics?resource_id=sc-domain:ayudazoom.com.es</div>
<div class="t" style="left:62.99px;top:103.00px;font-size:23px;color:#e8eaed;transform:scaleX(1.0086);">Google</div>
<div class="t" style="left:141.91px;top:103.00px;font-size:23px;color:#e8eaed;transform:scaleX(0.8947);">Search</div>
<div class="t" style="left:209.47px;top:103.00px;font-size:23px;color:#e8eaed;transform:scaleX(0.9274);">Console</div>
<div class="t" style="left:405.51px;top:103.00px;font-size:15px;color:#b9c3c8;-webkit-text-stroke:0.45px #b9c3c8;transform:scaleX(0.9854);">Inspeccionar las URL de &quot;ayudazoom.com.es&quot;</div>
<div class="t" style="left:60.50px;top:167.00px;font-size:13px;color:#3c4043;transform:scaleX(0.9936);">ayudazoom.com.es</div>
<div class="t" style="left:60.50px;top:228.00px;font-size:13px;color:#546e7a;-webkit-text-stroke:0.2px #546e7a;">Descripción general</div>
<div class="t" style="left:60.50px;top:268.00px;font-size:13px;color:#546e7a;-webkit-text-stroke:0.2px #546e7a;">Rendimiento</div>
<div class="t" style="left:60.53px;top:308.00px;font-size:13px;color:#212121;-webkit-text-stroke:0.2px #212121;transform:scaleX(0.9729);">Inspección de URLs</div>
<div class="t" style="left:24.40px;top:364.00px;font-size:13px;color:#80868b;">Índice</div>
<div class="t" style="left:60.80px;top:404.00px;font-size:13px;color:#212121;-webkit-text-stroke:0.2px #212121;transform:scaleX(0.9679);">Cobertura</div>
<div class="t" style="left:60.80px;top:444.00px;font-size:13px;color:#212121;-webkit-text-stroke:0.2px #212121;transform:scaleX(0.9837);">Sitemaps</div>
<div class="t" style="left:60.65px;top:484.00px;font-size:13px;color:#212121;-webkit-text-stroke:0.2px #212121;transform:scaleX(0.9472);">Retirada de URLs</div>
<div class="t" style="left:23.21px;top:540.00px;font-size:13px;color:#80868b;transform:scaleX(0.9868);">Experiencia</div>
<div class="t" style="left:60.72px;top:580.00px;font-size:13px;color:#212121;-webkit-text-stroke:0.2px #212121;transform:scaleX(0.9779);">Experiencia en la página</div>
<div class="t" style="left:60.69px;top:620.00px;font-size:13px;color:#212121;-webkit-text-stroke:0.2px #212121;transform:scaleX(1.0117);">Métricas web principales</div>
<div class="t" style="left:60.70px;top:660.00px;font-size:13px;color:#212121;-webkit-text-stroke:0.2px #212121;">Usabilidad móvil</div>
<div class="t" style="left:23.36px;top:716.00px;font-size:13px;color:#80868b;transform:scaleX(1.0364);">Mejoras</div>
<div class="t" style="left:304.00px;top:167.00px;font-size:20px;color:#202124;">Rendimiento</div>
<div class="t" style="left:1260.63px;top:167.00px;font-size:14px;color:#3c4043;-webkit-text-stroke:0.15px #3c4043;transform:scaleX(0.9663);">EXPORTAR</div>
<div class="t" style="left:353.60px;top:231.00px;font-size:13px;color:#ffffff;-webkit-text-stroke:0.3px #ffffff;transform:scaleX(0.9731);">Tipo de búsqueda: Web</div>
<div class="t" style="left:539.62px;top:231.00px;font-size:13px;color:#ffffff;-webkit-text-stroke:0.3px #ffffff;transform:scaleX(0.9818);">Fecha: Últimos 3 meses</div>
<div class="t" style="left:757.91px;top:230.00px;font-size:14px;color:#5f6368;-webkit-text-stroke:0.25px #5f6368;transform:scaleX(0.8876);">NUEVO</div>
<div class="t" style="left:1087.06px;top:231.00px;font-size:16px;color:#757575;transform:scaleX(0.9370);">Última actualización: hace 4 horas</div>
<div class="t" style="left:348.30px;top:321.00px;font-size:13px;color:#ffffff;-webkit-text-stroke:0.3px #ffffff;">Clics totales</div>
<div class="t" style="left:327.88px;top:356.00px;font-size:32px;color:#ffffff;transform:scaleX(1.0156);">226</div>
<div class="t" style="left:527.50px;top:321.00px;font-size:13px;color:#ffffff;-webkit-text-stroke:0.3px #ffffff;">Impresiones total...</div>
<div class="t" style="left:508.40px;top:356.00px;font-size:32px;color:#ffffff;">8,42 mil</div>
<div class="t" style="left:708.50px;top:321.00px;font-size:13px;color:#5f6368;transform:scaleX(0.9587);">CTR medio</div>
<div class="t" style="left:687.60px;top:356.00px;font-size:32px;color:#666666;transform:scaleX(0.8995);">2,7 %</div>
<div class="t" style="left:887.40px;top:321.00px;font-size:13px;color:#5f6368;">Posición media</div>
<div class="t" style="left:867.96px;top:356.00px;font-size:32px;color:#666666;transform:scaleX(0.9213);">10,1</div>
<div class="t" style="left:320.20px;top:430.00px;font-size:12px;color:#5f6368;transform:scaleX(0.9924);">Clics</div>
<div class="t" style="left:1242.28px;top:430.00px;font-size:12px;color:#5f6368;transform:scaleX(1.0192);">Impresiones</div>
<div class="t" style="left:326.13px;top:447.00px;font-size:12px;color:#757575;">24</div>
<div class="t" style="left:326.13px;top:505.00px;font-size:12px;color:#757575;">16</div>
<div class="t" style="left:332.80px;top:563.00px;font-size:12px;color:#757575;">8</div>
<div class="t" style="left:332.80px;top:620.00px;font-size:12px;color:#757575;">0</div>
<div class="t" style="left:1282.30px;top:447.00px;font-size:12px;color:#757575;">600</div>
<div class="t" style="left:1282.30px;top:505.00px;font-size:12px;color:#757575;">400</div>
<div class="t" style="left:1282.30px;top:563.00px;font-size:12px;color:#757575;">200</div>
<div class="t" style="left:1282.30px;top:620.00px;font-size:12px;color:#757575;">0</div>
<div class="t" style="left:336.00px;top:641.00px;font-size:12.5px;color:#757575;transform:scaleX(1.0141);">11/5/21</div>
<div class="t" style="left:436.33px;top:641.00px;font-size:12.5px;color:#757575;transform:scaleX(1.0141);">15/5/21</div>
<div class="t" style="left:537.13px;top:641.00px;font-size:12.5px;color:#757575;transform:scaleX(1.0141);">19/5/21</div>
<div class="t" style="left:637.93px;top:641.00px;font-size:12.5px;color:#757575;transform:scaleX(1.0141);">23/5/21</div>
<div class="t" style="left:738.73px;top:641.00px;font-size:12.5px;color:#757575;transform:scaleX(1.0141);">27/5/21</div>
<div class="t" style="left:839.53px;top:641.00px;font-size:12.5px;color:#757575;transform:scaleX(1.0141);">31/5/21</div>
<div class="t" style="left:943.85px;top:641.00px;font-size:12.5px;color:#757575;transform:scaleX(1.0141);">4/6/21</div>
<div class="t" style="left:1044.65px;top:641.00px;font-size:12.5px;color:#757575;transform:scaleX(1.0141);">8/6/21</div>
<div class="t" style="left:1141.93px;top:641.00px;font-size:12.5px;color:#757575;transform:scaleX(1.0141);">12/6/21</div>
<div class="t" style="left:1242.73px;top:641.00px;font-size:12.5px;color:#757575;transform:scaleX(1.0141);">16/6/21</div>
<div class="t" style="left:383.10px;top:727.00px;font-size:14px;color:#202124;-webkit-text-stroke:0.3px #202124;transform:scaleX(0.9115);">CONSULTAS</div>
<div class="t" style="left:528.06px;top:727.00px;font-size:14px;color:#5f6368;-webkit-text-stroke:0.3px #5f6368;transform:scaleX(0.9359);">PÁGINAS</div>
<div class="t" style="left:654.98px;top:727.00px;font-size:14px;color:#5f6368;-webkit-text-stroke:0.3px #5f6368;transform:scaleX(0.9232);">PAÍSES</div>
<div class="t" style="left:769.06px;top:727.00px;font-size:14px;color:#5f6368;-webkit-text-stroke:0.3px #5f6368;transform:scaleX(0.9388);">DISPOSITIVOS</div>
<div class="t" style="left:930.50px;top:727.00px;font-size:14px;color:#5f6368;-webkit-text-stroke:0.3px #5f6368;transform:scaleX(0.9222);">APARIENCIA EN EL BUSCADOR</div>
<div class="t" style="left:1193.76px;top:727.00px;font-size:14px;color:#5f6368;-webkit-text-stroke:0.3px #5f6368;transform:scaleX(0.9414);">FECHAS</div>
<div class="t" style="left:1009.80px;top:749.00px;font-size:13px;color:#1f1f1f;transform:scaleX(0.9351);z-index:11;">18°C</div>
<div class="t" style="left:1045.63px;top:749.00px;font-size:13px;color:#1f1f1f;transform:scaleX(1.0658);z-index:11;">Nublado</div>
<div class="t" style="left:1215.50px;top:748.00px;font-size:12px;color:#1f1f1f;transform:scaleX(0.7539);z-index:11;">ESP</div>
<div class="t" style="left:1264.30px;top:739.00px;font-size:12px;color:#1f1f1f;transform:scaleX(0.8519);z-index:11;">20:11</div>
<div class="t" style="left:1250.00px;top:757.00px;font-size:12px;color:#1f1f1f;transform:scaleX(0.9158);z-index:11;">17/06/2021</div>
</body></html>
